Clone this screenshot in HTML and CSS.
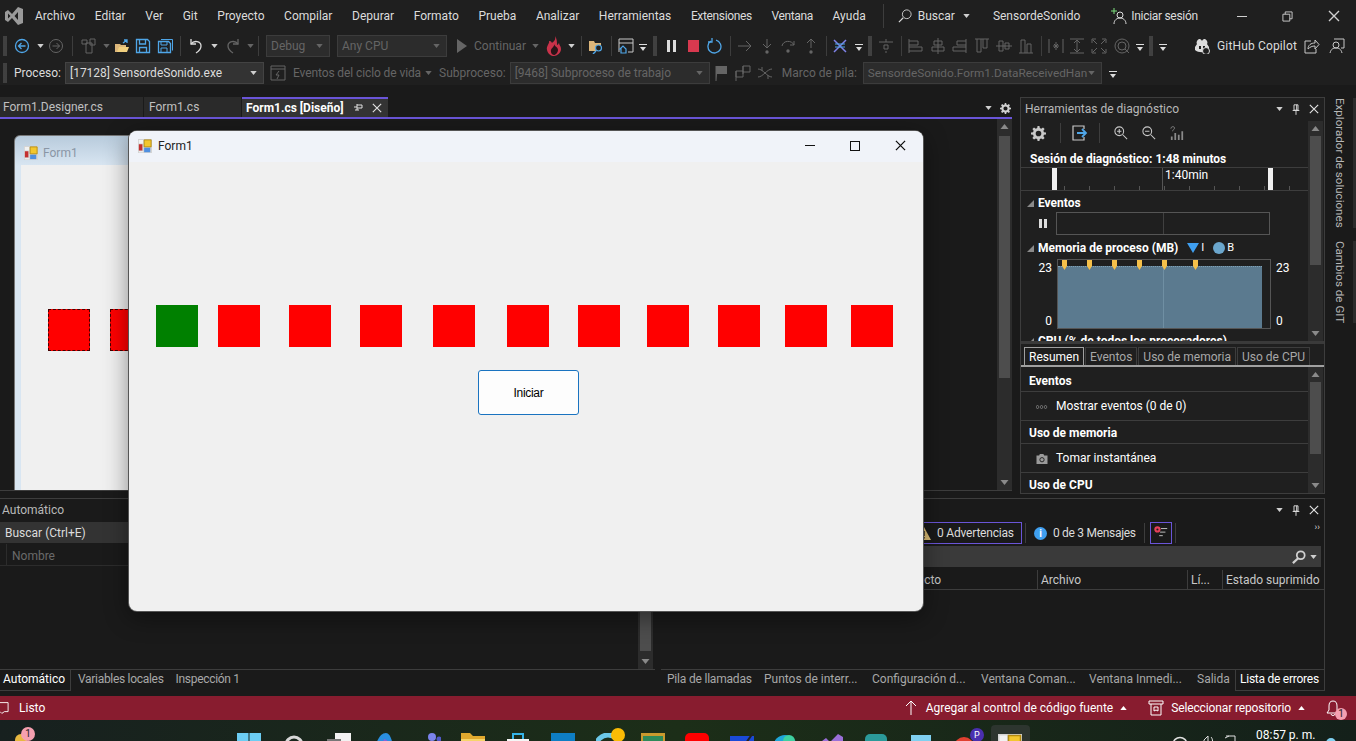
FILE: index.html
```html
<!DOCTYPE html>
<html lang="es">
<head>
    <meta charset="UTF-8">
    <meta name="viewport" content="width=device-width, initial-scale=1.0">
    <title>SensordeSonido - Visual Studio</title>
    <link rel="stylesheet" href="styles.css">
</head>
<body>
    <!-- shared icons -->
    <svg class="defs" width="0" height="0">
        <symbol id="caret" viewBox="0 0 8 5"><path d="M0 0h8L4 5z" fill="currentColor"/></symbol>
        <symbol id="over" viewBox="0 0 8 12"><path d="M0 4h8v1H0zM1 7h6L4 11z" fill="currentColor"/></symbol>
        <symbol id="back" viewBox="0 0 16 16"><circle cx="8" cy="8" r="6.5" fill="none" stroke="currentColor" stroke-width="1.3"/><path d="M11.5 8h-7M7.5 5l-3 3 3 3" fill="none" stroke="currentColor" stroke-width="1.3"/></symbol>
        <symbol id="fwd" viewBox="0 0 16 16"><circle cx="8" cy="8" r="6.5" fill="none" stroke="currentColor"/><path d="M4.5 8h7M8.5 5l3 3-3 3" fill="none" stroke="currentColor"/></symbol>
        <symbol id="newitem" viewBox="0 0 16 16"><path d="M5 5h6v10H5zM1 2h5v4H1zM9 1h5v6H9z" fill="none" stroke="currentColor"/></symbol>
        <symbol id="open" viewBox="0 0 16 16"><path d="M1 6h5l1 1h5v7H1z" fill="#dcb67a"/><path d="M3 14l2-5h10l-2 5z" fill="#f0cf7e"/><path d="M9 5l4-3m-3 0h3v3" fill="none" stroke="#4fa6e8" stroke-width="1.3"/></symbol>
        <symbol id="save" viewBox="0 0 16 16"><path d="M1.5 1.5h11l2 2v11h-13z" fill="none" stroke="currentColor" stroke-width="1.3"/><path d="M4.5 2v4h6V2M4.5 14V9.5h7V14" fill="none" stroke="currentColor" stroke-width="1.3"/></symbol>
        <symbol id="saveall" viewBox="0 0 16 16"><path d="M1.5 3.5h10l2 2v9h-12z" fill="none" stroke="currentColor" stroke-width="1.3"/><path d="M4 1.5h11.500v11M4 4v3h6V4M4 14v-4h6v4" fill="none" stroke="currentColor"/></symbol>
        <symbol id="undo" viewBox="0 0 16 16"><path d="M3 1v5h5" fill="none" stroke="currentColor" stroke-width="1.3"/><path d="M3 6c3-4 10-3 10 2 0 3-2 5-5 7" fill="none" stroke="currentColor" stroke-width="1.3"/></symbol>
        <symbol id="redo" viewBox="0 0 16 16"><path d="M13 1v5H8" fill="none" stroke="currentColor" stroke-width="1.3"/><path d="M13 6C10 2 3 3 3 8c0 3 2 5 5 7" fill="none" stroke="currentColor" stroke-width="1.3"/></symbol>
        <symbol id="flame" viewBox="0 0 16 20"><path d="M9 0c1 4-1 5-3 7C5 5 4 5 3 5 4 7 0 10 1 14c1 4 4 6 7 6s7-3 7-7c0-3-2-4-2-6-1 1-1 2-2 2 0-3 0-6-2-9z" fill="#c8324a"/><path d="M8 8c1 3-4 4-3 8 0 2 2 3 3 3s4-2 4-5c0-3-3-3-4-6z" fill="#2a1418"/></symbol>
        <symbol id="foldersearch" viewBox="0 0 16 16"><path d="M1 3h5l1 2h6v8H1z" fill="#dcb67a"/><circle cx="10.500" cy="10" r="3" fill="#1f1f1f" stroke="#4fa6e8" stroke-width="1.2"/><path d="M8 13l-3 3" stroke="#4fa6e8" stroke-width="1.4"/></symbol>
        <symbol id="windowhome" viewBox="0 0 16 16"><path d="M1 14V1h14v13h-5M1 5h14" fill="none" stroke="#c8c8c8"/><path d="M2 11l3-3 3 3v4H3v-4z" fill="none" stroke="#4fa6e8" stroke-width="1.2"/></symbol>
        <symbol id="restart" viewBox="0 0 16 16"><path d="M9 2.2A6.5 6.5 0 1 1 4 3" fill="none" stroke="#4fa6e8" stroke-width="1.3"/><path d="M5 0v4H1" fill="none" stroke="#4fa6e8" stroke-width="1.3"/></symbol>
        <symbol id="arrowr" viewBox="0 0 16 16"><path d="M1 8h13M9 3l5 5-5 5" fill="none" stroke="currentColor"/></symbol>
        <symbol id="into" viewBox="0 0 16 16"><path d="M8 1v8M4 6l4 4 4-4" fill="none" stroke="currentColor"/><circle cx="8" cy="14" r="1.7" fill="currentColor"/></symbol>
        <symbol id="stepover" viewBox="0 0 16 16"><path d="M2 8c1-6 10-6 12-1M14 3v4h-4" fill="none" stroke="currentColor"/><circle cx="8" cy="13" r="1.7" fill="currentColor"/></symbol>
        <symbol id="out" viewBox="0 0 16 16"><path d="M8 10V1M4 5l4-4 4 4" fill="none" stroke="currentColor"/><circle cx="8" cy="14" r="1.7" fill="currentColor"/></symbol>
        <symbol id="threads" viewBox="0 0 16 16"><path d="M2 14C6 10 10 6 14 2M2 2c4 4 8 8 12 12" fill="none" stroke="#7f82e8" stroke-width="1.5"/><path d="M3 9h10M3 6h10" stroke="#4fa6e8"/></symbol>
        <symbol id="alignbox" viewBox="0 0 16 16"><path d="M8 1v3M8 13v2M1 4h14M6 7h4v4H6z" fill="none" stroke="currentColor"/></symbol>
        <symbol id="alignl" viewBox="0 0 16 16"><path d="M1 1v14M1 3h9v4H1M1 9h13v4H1" fill="none" stroke="currentColor"/></symbol>
        <symbol id="alignc" viewBox="0 0 16 16"><path d="M8 0v16M4 3h8v4H4zM2 9h12v4H2z" fill="none" stroke="currentColor"/></symbol>
        <symbol id="alignr" viewBox="0 0 16 16"><path d="M15 1v14M15 3H6v4h9M15 9H2v4h13" fill="none" stroke="currentColor"/></symbol>
        <symbol id="alignt" viewBox="0 0 16 16"><path d="M1 1h14M3 1v13h4V1M9 1v9h4V1" fill="none" stroke="currentColor"/></symbol>
        <symbol id="alignm" viewBox="0 0 16 16"><path d="M0 8h16M3 3h4v10H3zM9 5h4v6H9z" fill="none" stroke="currentColor"/></symbol>
        <symbol id="alignb" viewBox="0 0 16 16"><path d="M1 15h14M3 15V2h4v13M9 15V6h4v9" fill="none" stroke="currentColor"/></symbol>
        <symbol id="spacing" viewBox="0 0 16 16"><path d="M1 1v14M15 1v14M8 4v8M5 8h6M6 6l4 4M10 6l-4 4" fill="none" stroke="currentColor"/></symbol>
        <symbol id="height" viewBox="0 0 16 16"><path d="M1 1h14M1 15h14M8 2v12M5 5l3-3 3 3M5 11l3 3 3-3" fill="none" stroke="currentColor"/></symbol>
        <symbol id="expand" viewBox="0 0 16 16"><path d="M1 5V1h4M11 1h4v4M15 11v4h-4M5 15H1v-4M2 2l4 4M14 2l-4 4M14 14l-4-4M2 14l4-4" fill="none" stroke="currentColor"/></symbol>
        <symbol id="zoomring" viewBox="0 0 16 16"><circle cx="8" cy="8" r="7" fill="none" stroke="currentColor"/><circle cx="8" cy="8" r="4" fill="none" stroke="currentColor"/><path d="M11 11l4 4" stroke="currentColor"/></symbol>
        <symbol id="copilot" viewBox="0 0 16 16"><path d="M3 3c2-3 4-2 5 0 1-2 3-3 5 0 1 2 0 3 0 3l2 3v3c-3 3-11 3-14 0V9l2-3s-1-1 0-3z" fill="#dcdcdc"/><path d="M5 8h2v3H5zM9 8h2v3H9z" fill="#1f1f1f"/><circle cx="12" cy="13" r="3.5" fill="#1f1f1f" stroke="#dcdcdc"/></symbol>
        <symbol id="share" viewBox="0 0 16 16"><path d="M7 3H1v12h11v-4" fill="none" stroke="currentColor"/><path d="M4 11c0-4 3-6 7-6V2l4 4.500-4 4.500V8c-3 0-5 1-7 3z" fill="none" stroke="currentColor"/></symbol>
        <symbol id="feedback" viewBox="0 0 16 16"><path d="M5 1h10v9h-3" fill="none" stroke="currentColor"/><circle cx="7" cy="7" r="3" fill="none" stroke="currentColor"/><path d="M1 15c1-4 3-5 6-5s5 1 6 5" fill="none" stroke="currentColor"/></symbol>
        <symbol id="lifecycle" viewBox="0 0 16 16"><path d="M1 1h14v14H1zM1 4h14M9 6L6 10h3l-2 4" fill="none" stroke="currentColor"/></symbol>
        <symbol id="flag" viewBox="0 0 16 16"><path d="M3 16V1h11v8H4" fill="currentColor"/><path d="M3 1v15" stroke="currentColor"/></symbol>
        <symbol id="flags" viewBox="0 0 16 16"><path d="M8 1h7v6H8zM1 6h7v6H1z" fill="none" stroke="currentColor"/><path d="M1 6v10M8 1v8" stroke="currentColor"/></symbol>
        <symbol id="crossthread" viewBox="0 0 16 16"><path d="M1 4c5 0 9 8 14 8M1 12c5 0 9-8 14-8M5 2v4M11 10v4" fill="none" stroke="currentColor"/></symbol>
        <symbol id="gear" viewBox="0 0 16 16"><path d="M7 0h2l.4 2.200 1.500.6L12.800 1.500l1.700 1.700-1.300 1.900.6 1.500 2.200.4v2l-2.200.4-.6 1.500 1.300 1.900-1.700 1.700-1.900-1.300-1.500.6L9 16H7l-.4-2.200-1.500-.6-1.900 1.300-1.700-1.700 1.300-1.900-.6-1.500L0 9V7l2.200-.4.6-1.500-1.300-1.900 1.700-1.700 1.900 1.300 1.500-.6zM8 5a3 3 0 1 0 0 6 3 3 0 0 0 0-6z" fill="currentColor" fill-rule="evenodd"/></symbol>
        <symbol id="pin" viewBox="0 0 12 16"><path d="M3 1h6v8H3zM7 1v8M1 9.500h10M6 10v6" fill="none" stroke="currentColor" stroke-width="1.4"/></symbol>
        <symbol id="close" viewBox="0 0 12 12"><path d="M1 1l10 10M11 1L1 11" stroke="currentColor" stroke-width="1.4"/></symbol>
        <symbol id="formicon" viewBox="0 0 16 16"><path d="M0 0h16v16H0z" fill="#d4d4d4"/><path d="M1 1h5v4H1zM1 14h5v1H1z" fill="#f2f2f2"/><path d="M7 1h8v8H7z" fill="#f3c72e" stroke="#b28a10"/><path d="M1 6h4v7H1z" fill="#c43030"/><path d="M7 10h7v5H7z" fill="#4f8fe0"/></symbol>
        <symbol id="zoomin" viewBox="0 0 16 16"><circle cx="6" cy="6" r="5" fill="none" stroke="currentColor" stroke-width="1.2"/><path d="M3.500 6h5M6 3.500v5M10 10l5 5" fill="none" stroke="currentColor" stroke-width="1.2"/></symbol>
        <symbol id="zoomout" viewBox="0 0 16 16"><circle cx="6" cy="6" r="5" fill="none" stroke="currentColor" stroke-width="1.2"/><path d="M3.500 6h5M10 10l5 5" fill="none" stroke="currentColor" stroke-width="1.2"/></symbol>
        <symbol id="reset" viewBox="0 0 16 16"><path d="M12 4V1H1v14h11v-3" fill="none" stroke="#c8c8c8" stroke-width="1.2"/><path d="M5 8h9M10 4l4 4-4 4" fill="none" stroke="#4fa6e8" stroke-width="1.8"/></symbol>
        <symbol id="stats" viewBox="0 0 16 16"><path d="M5 8h2v8H5zM9 10h2v6H9zM13 6h2v10h-2zM1 12h2v4H1z" fill="currentColor"/><path d="M1 3c0-3 5-3 4 0 0 1-2 1-2 3" fill="none" stroke="currentColor"/></symbol>
        <symbol id="camera" viewBox="0 0 16 14"><path d="M0 2h4l1-2h5l1 2h5v12H0z" fill="currentColor"/><circle cx="8" cy="8" r="3" fill="none" stroke="#1f1f1f" stroke-width="1.3"/></symbol>
        <symbol id="search" viewBox="0 0 16 16"><circle cx="10" cy="6" r="4.500" fill="none" stroke="currentColor" stroke-width="2"/><path d="M7 9.500L1 15" stroke="currentColor" stroke-width="2.500"/></symbol>
        <symbol id="searchthin" viewBox="0 0 16 16"><circle cx="10" cy="6" r="5" fill="none" stroke="currentColor"/><path d="M6 10l-5 5" stroke="currentColor" stroke-width="1.3"/></symbol>
        <symbol id="signin" viewBox="0 0 16 16"><circle cx="9" cy="7" r="3" fill="none" stroke="currentColor"/><path d="M3 16c0-4 3-6 6-6s6 2 6 6" fill="none" stroke="currentColor"/><path d="M3 0v6M0 3h6" stroke="#7fe07f"/></symbol>
        <symbol id="up" viewBox="0 0 16 16"><path d="M8 15V1M3 6l5-5 5 5" fill="none" stroke="currentColor"/></symbol>
        <symbol id="repo" viewBox="0 0 16 16"><path d="M1 1h14v3H1zM3 4v11h10V4M6 7h4v4l-2-1-2 1z" fill="none" stroke="currentColor"/></symbol>
        <symbol id="bell" viewBox="0 0 16 16"><path d="M8 1c3 0 4 2 4 5v4l2 3H2l2-3V6c0-3 1-5 4-5zM6 14c0 2 4 2 4 0" fill="none" stroke="currentColor"/></symbol>
    </svg>

    <header class="menubar">
        <svg class="vs-logo" viewBox="0 0 18 18"><path d="M0 5l3-2 4 4 6-7 5 2v14l-5 2-6-7-4 4-3-2zM3 6.500v5L5.500 9zM13 5L9.500 9l3.500 4z" fill="#9a9a9a" fill-rule="evenodd"/></svg>
        <nav class="menu">
            <span>Archivo</span><span>Editar</span><span>Ver</span><span>Git</span><span>Proyecto</span><span>Compilar</span><span>Depurar</span><span>Formato</span><span>Prueba</span><span>Analizar</span><span>Herramientas</span><span class="tight">Extensiones</span><span class="tight">Ventana</span><span>Ayuda</span>
        </nav>
        <i class="vsep"></i>
        <div class="search-box">
            <svg class="i14"><use href="#searchthin"/></svg>
            <span>Buscar</span>
            <svg class="caret"><use href="#caret"/></svg>
        </div>
        <span class="solution">SensordeSonido</span>
        <div class="signin">
            <svg class="i16"><use href="#signin"/></svg>
            <span>Iniciar sesión</span>
        </div>
        <div class="win-buttons">
            <span class="min-btn"></span>
            <svg class="restore-btn" viewBox="0 0 12 12"><path d="M1 3.500h7.500V11H1zM3.500 3.500V1H11v7.500H8.500" fill="none" stroke="#d0d0d0"/></svg>
            <svg class="close-btn"><use href="#close"/></svg>
        </div>
    </header>

    <div class="toolbar">
        <span class="s10"><i class="grip"></i></span>
        <span class="s24 blue"><svg class="i16"><use href="#back"/></svg></span>
        <span class="s12"><svg class="caret"><use href="#caret"/></svg></span>
        <span class="s20 off"><svg class="i16"><use href="#fwd"/></svg></span>
        <span class="s12"><i class="tsep"></i></span>
        <span class="s22 off"><svg class="i16"><use href="#newitem"/></svg></span>
        <span class="s12 off"><svg class="caret"><use href="#caret"/></svg></span>
        <span class="s20"><svg class="i16"><use href="#open"/></svg></span>
        <span class="s22 blue"><svg class="i16"><use href="#save"/></svg></span>
        <span class="s22 blue"><svg class="i16"><use href="#saveall"/></svg></span>
        <span class="s8"><i class="tsep"></i></span>
        <span class="s24"><svg class="i16"><use href="#undo"/></svg></span>
        <span class="s12"><svg class="caret"><use href="#caret"/></svg></span>
        <span class="s26 off"><svg class="i16"><use href="#redo"/></svg></span>
        <span class="s8 off"><svg class="caret"><use href="#caret"/></svg></span>
        <span class="s8"><i class="tsep"></i></span>
        <div class="combo combo-debug off">Debug<svg class="caret"><use href="#caret"/></svg></div>
        <div class="combo combo-cpu off">Any CPU<svg class="caret"><use href="#caret"/></svg></div>
        <span class="s24 play off"><svg class="i14" viewBox="0 0 10 14"><path d="M0 0l10 7-10 7z" fill="currentColor"/></svg></span>
        <span class="continue off">Continuar</span>
        <span class="s12 off"><svg class="caret"><use href="#caret"/></svg></span>
        <span class="s26"><svg class="flame" viewBox="0 0 16 20"><use href="#flame"/></svg></span>
        <span class="s8"><svg class="caret"><use href="#caret"/></svg></span>
        <span class="s12"><i class="tsep"></i></span>
        <span class="s18"><svg class="i16"><use href="#foldersearch"/></svg></span>
        <span class="s12"><i class="tsep"></i></span>
        <span class="s18"><svg class="i16"><use href="#windowhome"/></svg></span>
        <span class="s16"><svg class="over"><use href="#over"/></svg></span>
        <span class="s8"><i class="grip"></i></span>
        <span class="s24"><i class="pause"></i></span>
        <span class="s20"><i class="stop"></i></span>
        <span class="s24"><svg class="i16"><use href="#restart"/></svg></span>
        <span class="s6"><i class="tsep"></i></span>
        <span class="s24 off"><svg class="i16"><use href="#arrowr"/></svg></span>
        <span class="s20 off"><svg class="i16"><use href="#into"/></svg></span>
        <span class="s22 off"><svg class="i16"><use href="#stepover"/></svg></span>
        <span class="s24 off"><svg class="i16"><use href="#out"/></svg></span>
        <span class="s6"><i class="tsep"></i></span>
        <span class="s22"><svg class="i16"><use href="#threads"/></svg></span>
        <span class="s16"><svg class="over"><use href="#over"/></svg></span>
        <span class="s6"><i class="grip"></i></span>
        <span class="s26 off"><svg class="i16"><use href="#alignbox"/></svg></span>
        <span class="s4"><i class="tsep"></i></span>
        <span class="s26 off"><svg class="i16"><use href="#alignl"/></svg></span>
        <span class="s18 off"><svg class="i16"><use href="#alignc"/></svg></span>
        <span class="s24 off"><svg class="i16"><use href="#alignr"/></svg></span>
        <span class="s22 off"><svg class="i16"><use href="#alignt"/></svg></span>
        <span class="s22 off"><svg class="i16"><use href="#alignm"/></svg></span>
        <span class="s22 off"><svg class="i16"><use href="#alignb"/></svg></span>
        <span class="s8"><i class="tsep"></i></span>
        <span class="s22 off"><svg class="i16"><use href="#spacing"/></svg></span>
        <span class="s20 off"><svg class="i16"><use href="#height"/></svg></span>
        <span class="s24 off"><svg class="i16"><use href="#expand"/></svg></span>
        <span class="s22 off"><svg class="i16"><use href="#zoomring"/></svg></span>
        <span class="s14"><svg class="over"><use href="#over"/></svg></span>
        <span class="s8"><i class="grip"></i></span>
        <span class="s16"><svg class="over"><use href="#over"/></svg></span>
        <div class="copilot">
            <svg class="i16"><use href="#copilot"/></svg>
            <span>GitHub Copilot</span>
            <svg class="i16 share"><use href="#share"/></svg>
            <svg class="i16 feedback"><use href="#feedback"/></svg>
        </div>
    </div>

    <div class="toolbar toolbar-debug">
        <span class="s10"><i class="grip"></i></span>
        <span class="label">Proceso:</span>
        <div class="combo combo-process">[17128] SensordeSonido.exe<svg class="caret"><use href="#caret"/></svg></div>
        <span class="s28 off"><svg class="i16"><use href="#lifecycle"/></svg></span>
        <span class="label off events">Eventos del ciclo de vida</span>
        <span class="s14 off"><svg class="caret"><use href="#caret"/></svg></span>
        <span class="label off subprocess">Subproceso:</span>
        <div class="combo combo-thread off">[9468] Subproceso de trabajo<svg class="caret"><use href="#caret"/></svg></div>
        <span class="s22 off"><svg class="i16"><use href="#flag"/></svg></span>
        <span class="s22 off"><svg class="i16"><use href="#flags"/></svg></span>
        <span class="s22 off"><svg class="i16"><use href="#crossthread"/></svg></span>
        <span class="label off frame">Marco de pila:</span>
        <div class="combo combo-frame off"><span>SensordeSonido.Form1.DataReceivedHan</span><svg class="caret"><use href="#caret"/></svg></div>
        <span class="s22"><svg class="over"><use href="#over"/></svg></span>
    </div>

    <div class="workspace">
        <div class="top-row">
            <section class="editor">
                <div class="doc-tabs">
                    <span class="doc-tab tab-designer">Form1.Designer.cs</span>
                    <span class="doc-tab tab-code">Form1.cs</span>
                    <span class="doc-tab active">Form1.cs [Diseño]
                        <svg class="tab-pin" viewBox="0 0 10 10"><path d="M3 1v6M3 2h5v3H3M0 4h3M1 7h4" fill="none" stroke="#e0e0e0"/></svg>
                        <svg class="tab-close"><use href="#close"/></svg>
                    </span>
                    <svg class="caret tabs-caret"><use href="#caret"/></svg>
                    <svg class="tabs-gear"><use href="#gear"/></svg>
                </div>
                <div class="design-surface">
                    <div class="design-form">
                        <div class="design-title">
                            <svg class="i14"><use href="#formicon"/></svg>
                            <span>Form1</span>
                        </div>
                        <div class="design-client">
                            <i class="design-box"></i>
                            <i class="design-box"></i>
                        </div>
                    </div>
                    <div class="scrollbar editor-scroll">
                        <svg class="arrow"><use href="#caret"/></svg>
                        <i class="thumb"></i>
                        <svg class="arrow down"><use href="#caret"/></svg>
                    </div>
                </div>
            </section>

            <section class="diag">
                <div class="panel-head">
                    <span>Herramientas de diagnóstico</span>
                    <svg class="caret"><use href="#caret"/></svg>
                    <svg class="head-pin"><use href="#pin"/></svg>
                    <svg class="head-close"><use href="#close"/></svg>
                </div>
                <div class="diag-body">
                    <div class="diag-content">
                        <div class="diag-tools">
                            <svg class="i16 gear"><use href="#gear"/></svg>
                            <i class="tsep"></i>
                            <svg class="i16 reset"><use href="#reset"/></svg>
                            <i class="tsep"></i>
                            <svg class="i14"><use href="#zoomin"/></svg>
                            <svg class="i14"><use href="#zoomout"/></svg>
                            <svg class="i14 stats"><use href="#stats"/></svg>
                        </div>
                        <div class="session">Sesión de diagnóstico: 1:48 minutos</div>
                        <div class="timeline"><i class="handle"></i><span>1:40min</span><i class="handle"></i></div>
                        <h4 class="graph-title"><i class="tri"></i>Eventos</h4>
                        <div class="events-row">
                            <i class="pause small"></i>
                            <div class="events-track"></div>
                        </div>
                        <h4 class="graph-title mem"><i class="tri"></i>Memoria de proceso (MB)
                            <i class="legend-i"></i><span class="legend-txt">I</span>
                            <i class="legend-b"></i><span class="legend-txt">B</span>
                        </h4>
                        <div class="chart-row">
                            <div class="axis"><span>23</span><span>0</span></div>
                            <div class="chart">
                                <div class="chart-fill"></div>
                                <i class="mark"></i><i class="mark"></i><i class="mark"></i><i class="mark"></i><i class="mark"></i><i class="mark"></i>
                            </div>
                            <div class="axis right"><span>23</span><span>0</span></div>
                        </div>
                        <h4 class="graph-title cpu"><i class="tri"></i>CPU (% de todos los procesadores)</h4>
                    </div>
                    <div class="scrollbar diag-scroll">
                        <svg class="arrow"><use href="#caret"/></svg>
                        <i class="thumb"></i>
                        <svg class="arrow down"><use href="#caret"/></svg>
                    </div>
                </div>
                <div class="diag-tabs">
                    <span class="active">Resumen</span><span>Eventos</span><span>Uso de memoria</span><span>Uso de CPU</span>
                </div>
                <div class="summary">
                    <ul class="summary-list">
                        <li class="group">Eventos</li>
                        <li class="action"><svg class="dots" viewBox="0 0 12 6"><path d="M0 3l1.500-2L3 3 1.500 5zM4 3l1.500-2L7 3 5.500 5zM8 3l1.500-2L11 3 9.500 5z" fill="none" stroke="#8a8a8a" stroke-width=".7"/></svg>Mostrar eventos (0 de 0)</li>
                        <li class="group">Uso de memoria</li>
                        <li class="action"><svg class="cam" viewBox="0 0 16 14"><use href="#camera"/></svg>Tomar instantánea</li>
                        <li class="group last">Uso de CPU</li>
                    </ul>
                    <div class="scrollbar summary-scroll">
                        <svg class="arrow"><use href="#caret"/></svg>
                        <i class="thumb"></i>
                        <svg class="arrow down"><use href="#caret"/></svg>
                    </div>
                </div>
            </section>

            <aside class="rail">
                <span>Explorador de soluciones</span>
                <span>Cambios de GIT</span>
            </aside>
        </div>

        <div class="bottom-row">
            <div class="bottom-left">
                <section class="auto-panel">
                    <div class="auto-head">Automático</div>
                    <div class="auto-search">Buscar (Ctrl+E)</div>
                    <div class="auto-cols"><span>Nombre</span></div>
                    <div class="scrollbar auto-scroll">
                        <i class="thumb"></i>
                        <svg class="arrow down"><use href="#caret"/></svg>
                    </div>
                </section>
                <div class="tool-tabs">
                    <span class="active">Automático</span><span>Variables locales</span><span>Inspección 1</span>
                </div>
            </div>
            <div class="bottom-right">
                <section class="error-panel">
                    <div class="err-head">
                        <svg class="caret"><use href="#caret"/></svg>
                        <svg class="head-pin"><use href="#pin"/></svg>
                        <svg class="head-close"><use href="#close"/></svg>
                    </div>
                    <div class="err-tools">
                        <div class="err-btn">
                            <svg class="warn" viewBox="0 0 14 13"><path d="M7 0l7 13H0z" fill="#e0c078"/><path d="M6.300 4h1.400v5H6.300zM6.300 10h1.400v1.500H6.300z" fill="#1f1f1f"/></svg>
                            0 Advertencias
                        </div>
                        <i class="tsep"></i>
                        <div class="err-msg"><i class="info">i</i>0 de 3 Mensajes</div>
                        <i class="tsep"></i>
                        <div class="err-filter">
                            <svg viewBox="0 0 18 16"><circle cx="5" cy="5" r="3.500" fill="#e8405a"/><circle cx="5" cy="5" r="1.200" fill="#1f1f1f"/><path d="M9 4h7M8 8h6M7 12h4" stroke="#d0d0d0"/></svg>
                        </div>
                        <i class="tsep"></i>
                        <span class="err-more">&rsaquo;&rsaquo;</span>
                    </div>
                    <div class="err-search">
                        <svg class="i14"><use href="#search"/></svg>
                        <svg class="caret"><use href="#caret"/></svg>
                    </div>
                    <div class="err-cols">
                        <span class="col-project">Proyecto</span>
                        <span class="col-file">Archivo</span>
                        <span class="col-line">Lí...</span>
                        <span class="col-state">Estado suprimido</span>
                    </div>
                </section>
                <div class="tool-tabs right-tabs">
                    <span>Pila de llamadas</span><span>Puntos de interr...</span><span>Configuración d...</span><span>Ventana Coman...</span><span>Ventana Inmedi...</span><span>Salida</span><span class="active">Lista de errores</span>
                </div>
            </div>
        </div>
    </div>

    <footer class="statusbar">
        <svg class="status-msg" viewBox="0 0 10 14"><path d="M-2 1h11v10H5l-3 2-2-2h-2z" fill="none" stroke="#fff"/></svg>
        <span class="status-text">Listo</span>
        <div class="status-right">
            <svg class="i16"><use href="#up"/></svg>
            <span>Agregar al control de código fuente</span>
            <svg class="caret flip"><use href="#caret"/></svg>
            <svg class="i16 repo"><use href="#repo"/></svg>
            <span class="repo-text">Seleccionar repositorio</span>
            <svg class="caret flip"><use href="#caret"/></svg>
            <div class="bell">
                <svg class="i16"><use href="#bell"/></svg>
                <i class="bell-badge">1</i>
            </div>
        </div>
    </footer>

    <div class="taskbar">
        <div class="widget"><i class="widget-sun"></i><i class="widget-badge">1</i></div>
        <div class="task-icons">
            <span><svg viewBox="0 0 24 24"><path d="M0 0h11.500v11.500H0zM12.500 0H24v11.500H12.500zM0 12.500h11.500V24H0zM12.500 12.500H24V24H12.500z" fill="#6ccdf3"/></svg></span>
            <span><svg viewBox="0 0 24 24"><circle cx="12" cy="12" r="8" fill="none" stroke="#d8d8d8" stroke-width="3"/></svg></span>
            <span><svg viewBox="0 0 24 24"><path d="M8 0h16v16H8z" fill="#f2f2f2"/><path d="M0 6h14v12H0z" fill="#777"/></svg></span>
            <span><svg viewBox="0 0 24 24"><path d="M2 20C4 8 8 0 14 0c4 0 7 8 8 20z" fill="#2a8fe0"/><path d="M12 6c3 0 8 6 10 14H8z" fill="#8a5fd8"/></svg></span>
            <span><svg viewBox="0 0 24 24"><circle cx="15" cy="4" r="4" fill="#7b83eb"/><circle cx="22" cy="6" r="2.500" fill="#5059c9"/><path d="M0 8h18v16H0z" fill="#5b5fc7"/></svg></span>
            <span><svg viewBox="0 0 24 24"><path d="M0 0h9l3 3h12v21H0z" fill="#e0a92e"/><path d="M0 6h24v18H0z" fill="#f7d56a"/></svg></span>
            <span><svg viewBox="0 0 24 24"><path d="M7 6V1h10v5" fill="none" stroke="#35b4e8" stroke-width="2"/><path d="M1 6h22v18H1z" fill="#f5f5f5"/></svg></span>
            <span><svg viewBox="0 0 24 24"><path d="M0 0h24v24H0z" fill="#0e7ec4"/><path d="M12 12v8" stroke="#fff" stroke-width="2"/></svg></span>
            <span class="with-dot"><svg viewBox="0 0 24 24"><circle cx="12" cy="14" r="12" fill="none" stroke="#6cc8e8" stroke-width="5"/></svg><i class="task-dot"></i></span>
            <span><svg viewBox="0 0 24 24"><path d="M0 0h24v24H0z" fill="#c99a2e"/><path d="M2 3h20v21H2z" fill="#2e8a5a"/></svg></span>
            <span><svg viewBox="0 0 24 24"><rect width="24" height="20" rx="5" fill="#f00"/></svg></span>
            <span><svg viewBox="0 0 24 24"><path d="M0 3h24v21H0z" fill="#1a4ad8"/><path d="M16 10L23 0" stroke="#222" stroke-width="2"/></svg></span>
            <span><svg viewBox="0 0 24 24"><circle cx="10" cy="14" r="12" fill="#1fa6d8"/><circle cx="14" cy="8" r="6" fill="#3ed0a0"/></svg></span>
            <span><svg viewBox="0 0 24 24"><path d="M2 8l4-3 4 4L18 1l5 3v18H2z" fill="#9a6fd8"/></svg></span>
            <span><svg viewBox="0 0 24 24"><rect y="1" width="22" height="23" rx="5" fill="#2b9a9a"/></svg></span>
            <span><svg viewBox="0 0 24 24"><path d="M2 2h20v22H2z" fill="#7fd0f0"/><path d="M6 10h12" stroke="#fff" stroke-width="2"/></svg></span>
            <span class="with-badge"><svg viewBox="0 0 24 24"><circle cx="10" cy="14" r="10" fill="#e04030"/><circle cx="12" cy="16" r="4" fill="#3a80e0"/></svg><i class="profile">P</i></span>
            <span class="running"><svg viewBox="0 0 24 24"><use href="#formicon"/></svg></span>
        </div>
        <div class="tray">
            <svg class="tray-ic" viewBox="0 0 16 10"><path d="M1 10C1 0 15 0 15 10" fill="none" stroke="#e0e0e0" stroke-width="1.500"/></svg>
            <svg class="tray-ic sm" viewBox="0 0 12 10"><path d="M1 10V5l4-4v9M8 2c2 2 2 6 0 8" fill="none" stroke="#e0e0e0"/></svg>
            <svg class="tray-ic" viewBox="0 0 16 10"><path d="M2 1h9v9M1 3l4-2" fill="none" stroke="#e0e0e0"/></svg>
            <span class="clock">08:57 p. m.</span>
            <i class="tray-dot"></i>
        </div>
    </div>

    <!-- running form on top of the IDE -->
    <div class="app-window">
        <div class="app-title">
            <svg class="i14"><use href="#formicon"/></svg>
            <span>Form1</span>
            <div class="app-buttons">
                <i class="app-min"></i>
                <i class="app-max"></i>
                <svg class="app-close"><use href="#close"/></svg>
            </div>
        </div>
        <div class="app-client">
            <div class="leds">
                <i class="led on"></i><i class="led"></i><i class="led"></i><i class="led"></i><i class="led"></i><i class="led"></i><i class="led"></i><i class="led"></i><i class="led"></i><i class="led"></i><i class="led"></i>
            </div>
            <button class="start-btn" type="button">Iniciar</button>
        </div>
    </div>
</body>
</html>
```

FILE: styles.css
```css
* {
    box-sizing: border-box;
}

html, body {
    height: 100%;
}

body {
    margin: 0;
    width: 1356px;
    height: 741px;
    overflow: hidden;
    background-color: #1a1a1a;
    color: #dcdcdc;
    font-family: Roboto, "Noto Sans", sans-serif;
    font-size: 12px;
    line-height: 16px;
    position: relative;
}

.defs {
    position: absolute;
}

i {
    font-style: normal;
    display: block;
}

svg {
    display: block;
    flex: none;
}

.i14 { width: 14px; height: 14px; }
.i16 { width: 16px; height: 16px; }

.caret {
    width: 7px;
    height: 4px;
    color: #cfcfcf;
}

.over {
    width: 8px;
    height: 12px;
    color: #dcdcdc;
}

/* menu bar */
.menubar {
    height: 32px;
    display: flex;
    align-items: center;
    background-color: #1f1f1f;
    padding-left: 5px;
}

.vs-logo {
    width: 18px;
    height: 18px;
    margin-right: 12px;
}

.menu {
    display: flex;
    gap: 19.6px;
}

.menu .tight {
    letter-spacing: -0.35px;
}

.vsep {
    width: 1px;
    height: 24px;
    background-color: #3d3d3d;
    margin-left: 17px;
}

.search-box {
    display: flex;
    align-items: center;
    gap: 6px;
    margin-left: 14px;
}

.search-box .caret {
    margin-left: 2px;
}

.solution {
    margin-left: 23px;
}

.signin {
    display: flex;
    align-items: center;
    gap: 4px;
    margin-left: 31px;
    letter-spacing: -0.3px;
}

.win-buttons {
    margin-left: auto;
    display: flex;
    align-items: center;
    width: 103px;
    justify-content: space-between;
    margin-right: 16px;
}

.min-btn {
    width: 10px;
    height: 1px;
    background-color: #d0d0d0;
}

.restore-btn { width: 11px; height: 11px; }
.close-btn { width: 12px; height: 12px; color: #d0d0d0; }

/* toolbars */
.toolbar {
    height: 28px;
    display: flex;
    align-items: center;
    background-color: #1f1f1f;
    color: #dcdcdc;
}

.toolbar-debug {
    height: 25px;
}

.toolbar > span {
    display: flex;
    align-items: center;
    justify-content: center;
    flex: none;
}

.s4 { width: 4px; }
.s6 { width: 6px; }
.s8 { width: 8px; }
.s10 { width: 10px; }
.s12 { width: 12px; }
.s14 { width: 14px; }
.s16 { width: 16px; }
.s18 { width: 18px; }
.s20 { width: 20px; }
.s22 { width: 22px; }
.s24 { width: 24px; }
.s26 { width: 26px; }
.s28 { width: 28px; }

.blue { color: #4fa6e8; }
.off, .off .caret { color: #656565; }

.grip {
    width: 4px;
    height: 20px;
    background-image: radial-gradient(#666 0.6px, transparent 0.8px);
    background-size: 2px 2px;
}

.tsep {
    width: 1px;
    height: 20px;
    background-color: #3d3d3d;
}

.flame { width: 16px; height: 20px; }

.combo {
    display: flex;
    align-items: center;
    justify-content: space-between;
    height: 22px;
    background-color: #333;
    border: 1px solid #434343;
    padding: 0 6px 0 3px;
    flex: none;
    white-space: nowrap;
    overflow: hidden;
}

.combo-debug { width: 64px; margin-left: 4px; padding-left: 4px; }
.combo-cpu { width: 110px; margin-left: 7px; padding-left: 4px; }

.combo.off {
    background-color: #2c2c2c;
    border-color: #3c3c3c;
}

.play {
    margin-left: 3px;
}

.toolbar > .continue {
    width: 55px;
    justify-content: flex-start;
}

.pause {
    width: 9px;
    height: 12px;
    border-left: 3px solid #dcdcdc;
    border-right: 3px solid #dcdcdc;
}

.stop {
    width: 11px;
    height: 12px;
    background-color: #d8394f;
}

.copilot {
    margin-left: 23px;
    display: flex;
    align-items: center;
    gap: 7px;
    flex: none;
    white-space: nowrap;
    letter-spacing: 0.15px;
}

.copilot .share { margin-left: 0; color: #c8c8c8; }
.copilot .feedback { margin-left: 2px; margin-right: 8px; color: #c8c8c8; }

.toolbar > .label {
    margin-left: 4px;
    white-space: nowrap;
}

.combo-process { width: 199px; margin-left: 4px; padding-left: 4px; }
.toolbar > .events { margin-left: 1px; letter-spacing: -0.1px; }
.toolbar > .subprocess { margin-left: 4px; }
.combo-thread { width: 200px; margin-left: 4px; padding-left: 4px; }
.toolbar > .frame { margin-left: 6px; }
.combo-frame { width: 239px; margin-left: 6px; padding-left: 4px; }
.combo-frame span { width: 222px; font-size: 11.8px; }

/* workspace */
.workspace {
    height: 611px;
    display: flex;
    flex-direction: column;
}

.top-row {
    height: 409px;
    padding-top: 12px;
    display: flex;
}

.editor {
    width: 1014px;
    margin-right: 6px;
    display: flex;
    flex-direction: column;
}

.doc-tabs {
    height: 22px;
    display: flex;
    align-items: flex-start;
    border-bottom: 2px solid #6a55d8;
    width: 1012px;
    position: relative;
}

.doc-tab {
    height: 20px;
    background-color: #2a2a2a;
    color: #c0c0c0;
    padding: 2px 3px;
    margin-right: 1px;
    display: flex;
    align-items: center;
}

.tab-designer { width: 143px; }
.tab-code { width: 97px; padding-left: 5px; }

.doc-tab.active {
    width: 146px;
    height: 20px;
    background-color: #343434;
    border-top: 2px solid #6a55d8;
    color: #fff;
    font-weight: 700;
    padding: 0 0 0 4px;
    margin-left: 0;
}

.tab-pin { width: 10px; height: 10px; margin-left: 10px; }
.tab-close { width: 10px; height: 10px; margin-left: 8px; color: #e0e0e0; }

.tabs-caret {
    margin-left: auto;
    margin-top: 9px;
}

.tabs-gear {
    width: 11px;
    height: 11px;
    margin: 6px 1px 0 8px;
    color: #d0d0d0;
}

.design-surface {
    height: 372px;
    display: flex;
    justify-content: space-between;
    width: 1012px;
    overflow: hidden;
    padding-top: 16px;
    border-bottom: 1px solid #3d3d3d;
}

.design-form {
    width: 400px;
    height: 400px;
    margin-left: 14px;
    background: linear-gradient(180deg, #b8cbdc, #d9e6f2 30px);
    border: 1px solid #777;
    border-radius: 6px 0 0 0;
    padding: 0 0 0 6px;
}

.design-title {
    height: 29px;
    display: flex;
    align-items: center;
    gap: 5px;
    padding: 4px 0 0 3px;
    color: #8a96a5;
}

.design-client {
    height: 360px;
    background: linear-gradient(90deg, #f0f0f0 60%, #999 100%);
    display: flex;
    gap: 20px;
    padding: 144px 0 0 27px;
}

.design-box {
    width: 42px;
    height: 42px;
    background-color: #f00;
    border: 1px dashed #400;
}

/* shared scrollbar */
.scrollbar {
    width: 15px;
    display: flex;
    flex-direction: column;
    align-items: center;
    background-color: #2c2c2c;
    flex: none;
    color: #8a8a8a;
}

.arrow {
    width: 9px;
    height: 5px;
    margin: 5px 0;
    transform: rotate(180deg);
    color: #8a8a8a;
}

.arrow.down {
    transform: none;
    margin-top: auto;
}

.thumb {
    width: 11px;
    background-color: #4d4d4d;
}

.editor-scroll {
    margin-top: -16px;
    height: 371px;
}

.editor-scroll .thumb { height: 242px; margin-top: 2px; }

/* diagnostic tools */
.diag {
    width: 305px;
    height: 397px;
    border: 1px solid #3d3d3d;
    display: flex;
    flex-direction: column;
    background-color: #1f1f1f;
    overflow: hidden;
}

.panel-head {
    height: 23px;
    display: flex;
    align-items: center;
    padding: 0 5px 1px 4px;
    color: #b8b8b8;
}

.panel-head span { margin-right: auto; }

.head-pin { width: 8px; height: 11px; margin-left: 9px; color: #e0e0e0; }
.head-close { width: 10px; height: 10px; margin-left: 9px; color: #e0e0e0; }

.diag-body {
    height: 220px;
    display: flex;
}

.diag-content {
    flex: 1;
    overflow: hidden;
}

.diag-scroll {
    width: 15px;
    margin-right: 1px;
}

.diag-scroll .thumb { height: 129px; }

.diag-tools {
    height: 24px;
    display: flex;
    align-items: center;
    gap: 14px;
    padding-left: 10px;
    color: #c8c8c8;
}

.diag-tools .gear { width: 15px; height: 15px; }
.diag-tools .reset { margin: 0 -3px; }
.diag-tools .stats { color: #8a8a8a; }

.session {
    height: 23px;
    padding: 6px 0 0 9px;
    font-weight: 700;
    color: #fff;
    border-bottom: 1px solid #3d3d3d;
}

.timeline {
    height: 23px;
    border-bottom: 1px solid #3d3d3d;
    display: flex;
    justify-content: space-between;
    padding: 0 35px 0 31px;
    position: relative;
    background-image: repeating-linear-gradient(90deg, #555 0 1px, transparent 1px 25px);
    background-position: 43px 18px;
    background-size: 100% 4px;
    background-repeat: no-repeat;
    color: #fff;
}

.handle {
    width: 5px;
    height: 22px;
    background-color: #f0f0f0;
}

.timeline span {
    position: absolute;
    left: 141px;
    padding-left: 2px;
    border-left: 1px solid #555;
    height: 22px;
    line-height: 14px;
}

.graph-title {
    margin: 0;
    height: 20px;
    display: flex;
    align-items: center;
    font-size: 12px;
    color: #fff;
    font-weight: 700;
    padding: 4px 0 0 6px;
    white-space: nowrap;
}

.tri {
    width: 0;
    height: 0;
    border-left: 7px solid transparent;
    border-bottom: 7px solid #8a8a8a;
    margin-right: 4px;
}

.events-row {
    height: 24px;
    display: flex;
    align-items: center;
    padding-left: 18px;
}

.pause.small {
    width: 8px;
    height: 9px;
    margin-right: 9px;
    border-left-width: 3px;
    border-right-width: 3px;
}

.events-track {
    width: 214px;
    height: 23px;
    border: 1px solid #555;
    background: linear-gradient(#404040, #404040) 106px 0 / 1px 100% no-repeat;
}

.graph-title.mem {
    margin-top: 3px;
    padding-top: 0;
}

.legend-i {
    width: 0;
    height: 0;
    border-left: 6px solid transparent;
    border-right: 6px solid transparent;
    border-top: 10px solid #3f9ff0;
    margin-left: 9px;
}

.legend-txt {
    font-weight: 400;
    font-size: 11px;
    margin-left: 2px;
}

.legend-b {
    width: 12px;
    height: 12px;
    border-radius: 50%;
    background-color: #6ba6cc;
    margin-left: 9px;
}

.chart-row {
    height: 70px;
    margin-top: 1px;
    display: flex;
    color: #fff;
}

.axis {
    width: 36px;
    display: flex;
    flex-direction: column;
    justify-content: space-between;
    text-align: right;
    padding: 1px 5px 0 0;
}

.axis.right {
    text-align: left;
    padding: 1px 0 0 5px;
    margin-left: 0;
}

.chart {
    width: 214px;
    height: 70px;
    position: relative;
    border: 1px solid #555;
    padding-top: 6px;
}

.chart-fill {
    width: 204px;
    height: 62px;
    background-color: #5b7a8f;
    border-top: 1px dotted #7fa0b5;
    background-image: linear-gradient(#6f8fa3, #6f8fa3);
    background-size: 1px 100%;
    background-position: 105px 0;
    background-repeat: no-repeat;
}

.mark {
    position: absolute;
    top: 0;
    width: 5px;
    height: 10px;
    background-color: #f5c04a;
    clip-path: polygon(0 0, 100% 0, 100% 60%, 50% 100%, 0 60%);
}

.mark:nth-of-type(1) { left: 4px; }
.mark:nth-of-type(2) { left: 29px; }
.mark:nth-of-type(3) { left: 54px; }
.mark:nth-of-type(4) { left: 79px; }
.mark:nth-of-type(5) { left: 104px; }
.mark:nth-of-type(6) { left: 135px; }

.graph-title.cpu {
    margin-top: 2px;
    padding-top: 0;
}

.diag-tabs {
    height: 26px;
    border-top: 3px solid #3a3a3a;
    border-bottom: 2px solid #a0a0a0;
    display: flex;
    align-items: flex-end;
    padding-left: 3px;
    gap: 1px;
    color: #a8a8a8;
}

.diag-tabs span {
    height: 18px;
    border: 1px solid #3d3d3d;
    border-bottom: 0;
    padding: 0 4px;
    line-height: 18px;
    white-space: nowrap;
}

.diag-tabs .active {
    color: #fff;
    border-color: #a0a0a0;
}

.summary {
    flex: 1;
    display: flex;
    overflow: hidden;
}

.summary-list {
    list-style: none;
    margin: 2px 0 0;
    padding: 0;
    flex: 1;
}

.summary-list li {
    border-bottom: 1px solid #3d3d3d;
    display: flex;
    align-items: center;
    color: #fff;
}

.group {
    height: 23px;
    font-weight: 700;
    padding: 1px 0 0 8px;
}

.action {
    height: 29px;
    padding-left: 35px;
    position: relative;
}

.dots { width: 12px; height: 6px; position: absolute; left: 15px; top: 12px; }
.cam { width: 12px; height: 10px; position: absolute; left: 15px; top: 10px; color: #9a9a9a; }

.summary-list .last {
    border-bottom: 0;
}

.summary-scroll {
    margin-right: 1px;
}

.summary-scroll .thumb { height: 72px; }

/* right rail */
.rail {
    width: 31px;
    margin-left: 0;
    display: flex;
    flex-direction: column;
    gap: 13px;
    padding-top: 1px;
    color: #b8b8b8;
}

.rail span {
    writing-mode: vertical-rl;
    white-space: nowrap;
    font-size: 11.6px;
    width: 31px;
    padding-right: 5px;
    border-right: 3px solid #2c2c2c;
}

/* bottom panels */
.bottom-row {
    margin-top: 4px;
    display: flex;
}

.bottom-left {
    width: 655px;
    margin-right: 6px;
}

.bottom-right {
    width: 664px;
}

.auto-panel {
    height: 171px;
    border-top: 1px solid #3d3d3d;
    position: relative;
}

.auto-head {
    height: 23px;
    padding: 3px 2px;
    color: #b8b8b8;
}

.auto-search {
    height: 21px;
    background-color: #333;
    padding: 3px 5px;
    width: 636px;
}

.auto-cols {
    height: 22px;
    margin-top: 1px;
    padding-left: 6px;
    color: #6a6a6a;
    border-bottom: 1px solid #2c2c2c;
    width: 636px;
}

.auto-cols span {
    display: block;
    height: 21px;
    line-height: 25px;
    padding-left: 5px;
    border-left: 1px solid #2c2c2c;
}

.auto-scroll {
    position: absolute;
    right: 2px;
    top: 46px;
    bottom: 0;
}

.auto-scroll .thumb { height: 106px; }

.tool-tabs {
    height: 21px;
    display: flex;
    color: #a8a8a8;
    border-top: 1px solid #3d3d3d;
    gap: 7px;
}

.tool-tabs span {
    white-space: nowrap;
    line-height: 19px;
    height: 21px;
    letter-spacing: -0.3px;
}

.tool-tabs span:last-child {
    margin-left: 5px;
}

.tool-tabs .active {
    color: #fff;
    border: 1px solid #3d3d3d;
    border-width: 0 1px 1px 0;
    padding: 0 3px;
    width: 71px;
    letter-spacing: 0;
}

.error-panel {
    height: 171px;
    border: 1px solid #3d3d3d;
    border-bottom: 0;
    border-left: 0;
    position: relative;
}

.err-head {
    height: 22px;
    display: flex;
    align-items: center;
    justify-content: flex-end;
    padding-right: 5px;
}

.err-tools {
    height: 24px;
    display: flex;
    align-items: center;
    padding-left: 255px;
}

.err-btn {
    height: 22px;
    width: 106px;
    border: 1px solid #6a55d8;
    display: flex;
    align-items: center;
    gap: 6px;
    padding-left: 0;
    white-space: nowrap;
    margin-right: 3px;
    letter-spacing: -0.2px;
}

.warn { width: 14px; height: 13px; }

.err-msg {
    display: flex;
    align-items: center;
    gap: 6px;
    margin: 0 8px 0 8px;
    white-space: nowrap;
    letter-spacing: -0.3px;
}

.info {
    width: 13px;
    height: 13px;
    border-radius: 50%;
    background-color: #3f9ff0;
    color: #fff;
    font-size: 10px;
    line-height: 13px;
    text-align: center;
    font-weight: 700;
}

.err-filter {
    width: 22px;
    height: 22px;
    border: 1px solid #6a55d8;
    margin: 0 3px 0 5px;
    padding: 2px;
}

.err-more {
    margin-left: auto;
    margin-right: 4px;
    font-size: 9px;
    line-height: 9px;
    margin-top: -12px;
}

.err-search {
    height: 21px;
    background-color: #3a3a3a;
    margin: 1px 3px 0 0;
    display: flex;
    align-items: center;
    justify-content: flex-end;
    gap: 4px;
    padding-right: 4px;
    color: #d0d0d0;
}

.err-cols {
    height: 20px;
    display: flex;
    border-bottom: 1px solid #3d3d3d;
    margin-top: 3px;
    padding-left: 229px;
    white-space: nowrap;
    line-height: 21px;
}

.err-cols span {
    padding-left: 3px;
    color: #c8c8c8;
    border-left: 1px solid #3d3d3d;
}

.col-project { width: 147px; }
.col-file { width: 150px; }
.col-line { width: 35px; }
.col-state { width: 102px; }

.right-tabs {
    padding-left: 6px;
    display: grid;
    grid-template-columns: 97px 108px 109px 108px 108px 38px 90px;
    gap: 0;
}

.right-tabs span {
    letter-spacing: 0;
}

.right-tabs span:first-child {
    letter-spacing: -0.2px;
}

.right-tabs span:last-child {
    margin-left: 0;
}

.right-tabs .active {
    width: 90px;
    padding: 0 0 0 4px;
    border-width: 0 1px 1px 1px;
    letter-spacing: -0.25px;
}

/* status bar */
.statusbar {
    height: 24px;
    background-color: #881c2f;
    color: #fff;
    display: flex;
    align-items: center;
}

.status-msg { width: 9px; height: 14px; }

.status-text { margin-left: 10px; }

.status-right {
    margin-left: auto;
    display: flex;
    align-items: center;
    gap: 7px;
    padding-right: 15px;
}

.statusbar .caret { color: #fff; }
.flip { transform: rotate(180deg); }
.repo { margin-left: 14px; }
.repo-text { letter-spacing: -0.13px; }

.bell {
    position: relative;
    margin-left: 13px;
}

.bell-badge {
    position: absolute;
    right: -6px;
    bottom: -4px;
    width: 12px;
    height: 12px;
    border-radius: 50%;
    background-color: #f5a0b0;
    color: #222;
    font-size: 10px;
    line-height: 12px;
    text-align: center;
}

/* windows taskbar, only its top edge shows */
.taskbar {
    height: 21px;
    display: flex;
    background: linear-gradient(90deg, #17201f, #1c2e18 50%, #14201a);
    position: relative;
    overflow: hidden;
}

.widget {
    width: 20px;
    margin-left: 14px;
    position: relative;
}

.widget-sun {
    position: absolute;
    left: 1px;
    top: 14px;
    width: 12px;
    height: 12px;
    border-radius: 50%;
    background-color: #e8b840;
}

.widget-badge {
    position: absolute;
    left: 7px;
    top: 7px;
    width: 14px;
    height: 14px;
    border-radius: 50%;
    background-color: #f5a0b0;
    color: #222;
    font-size: 10px;
    line-height: 14px;
    text-align: center;
}

.task-icons {
    margin-left: 193px;
    display: grid;
    grid-auto-flow: column;
    grid-auto-columns: 44.8px;
    height: 21px;
}

.task-icons span {
    display: flex;
    justify-content: center;
    padding-top: 13px;
    position: relative;
}

.task-icons svg {
    width: 24px;
    height: 24px;
}

.task-dot {
    position: absolute;
    left: 26px;
    top: 8px;
    width: 14px;
    height: 14px;
    border-radius: 50%;
    background-color: #fbbc05;
}

.profile {
    position: absolute;
    left: 26px;
    top: 8px;
    width: 14px;
    height: 14px;
    border-radius: 50%;
    background-color: #4a2fb0;
    color: #fff;
    font-size: 9px;
    line-height: 14px;
    text-align: center;
}

.task-icons .running {
    background-color: #2d352f;
    border-radius: 4px 4px 0 0;
    margin: 5px 3px 0 2px;
    padding-top: 9px;
}

.tray {
    margin-left: auto;
    display: flex;
    padding-left: 0;
    width: 184px;
    position: relative;
}

.tray-ic {
    width: 16px;
    height: 10px;
    margin-top: 15px;
    margin-right: 15px;
}

.tray-ic.sm { width: 12px; margin-right: 9px; }

.clock {
    color: #fff;
    margin-left: 1px;
    margin-top: 7px;
    white-space: nowrap;
}

.tray-dot {
    position: absolute;
    left: 154px;
    top: 18px;
    width: 10px;
    height: 10px;
    border-radius: 50%;
    background-color: #7fd0f0;
}

/* running Form1 window, floats over the IDE */
.app-window {
    position: absolute;
    left: 129px;
    top: 131px;
    width: 794px;
    height: 480px;
    background-color: #f0f0f0;
    border-radius: 8px;
    box-shadow: 0 0 0 1px #555, 0 6px 24px rgba(0, 0, 0, 0.45);
    overflow: hidden;
    color: #000;
}

.app-title {
    height: 31px;
    background-color: #f0f3f9;
    display: flex;
    align-items: center;
    padding: 0 0 2px 9px;
    gap: 6px;
    color: #222;
}

.app-buttons {
    margin-left: auto;
    display: flex;
    align-items: center;
    gap: 35px;
    margin-right: 17px;
}

.app-min {
    width: 10px;
    height: 1px;
    background-color: #111;
}

.app-max {
    width: 10px;
    height: 10px;
    border: 1px solid #111;
}

.app-close {
    width: 11px;
    height: 11px;
    color: #111;
}

.app-client {
    padding: 143px 0 0 27px;
}

.leds {
    display: flex;
}

.led {
    width: 42px;
    height: 42px;
    background-color: #f00;
}

.led.on { background-color: #008000; }

/* the buttons are not evenly spaced on the form */
.led:nth-child(2) { margin-left: 20px; }
.led:nth-child(3) { margin-left: 29px; }
.led:nth-child(4) { margin-left: 29px; }
.led:nth-child(5) { margin-left: 31px; }
.led:nth-child(6) { margin-left: 32px; }
.led:nth-child(7) { margin-left: 29px; }
.led:nth-child(8) { margin-left: 27px; }
.led:nth-child(9) { margin-left: 29px; }
.led:nth-child(10) { margin-left: 25px; }
.led:nth-child(11) { margin-left: 24px; }

.start-btn {
    display: block;
    width: 101px;
    height: 45px;
    margin: 23px 0 0 322px;
    background-color: #fdfdfd;
    border: 1.5px solid #1a73c0;
    border-radius: 3px;
    font-family: "Liberation Sans", Arial, sans-serif;
    font-size: 12px;
    letter-spacing: -0.3px;
    color: #000;
}
```
